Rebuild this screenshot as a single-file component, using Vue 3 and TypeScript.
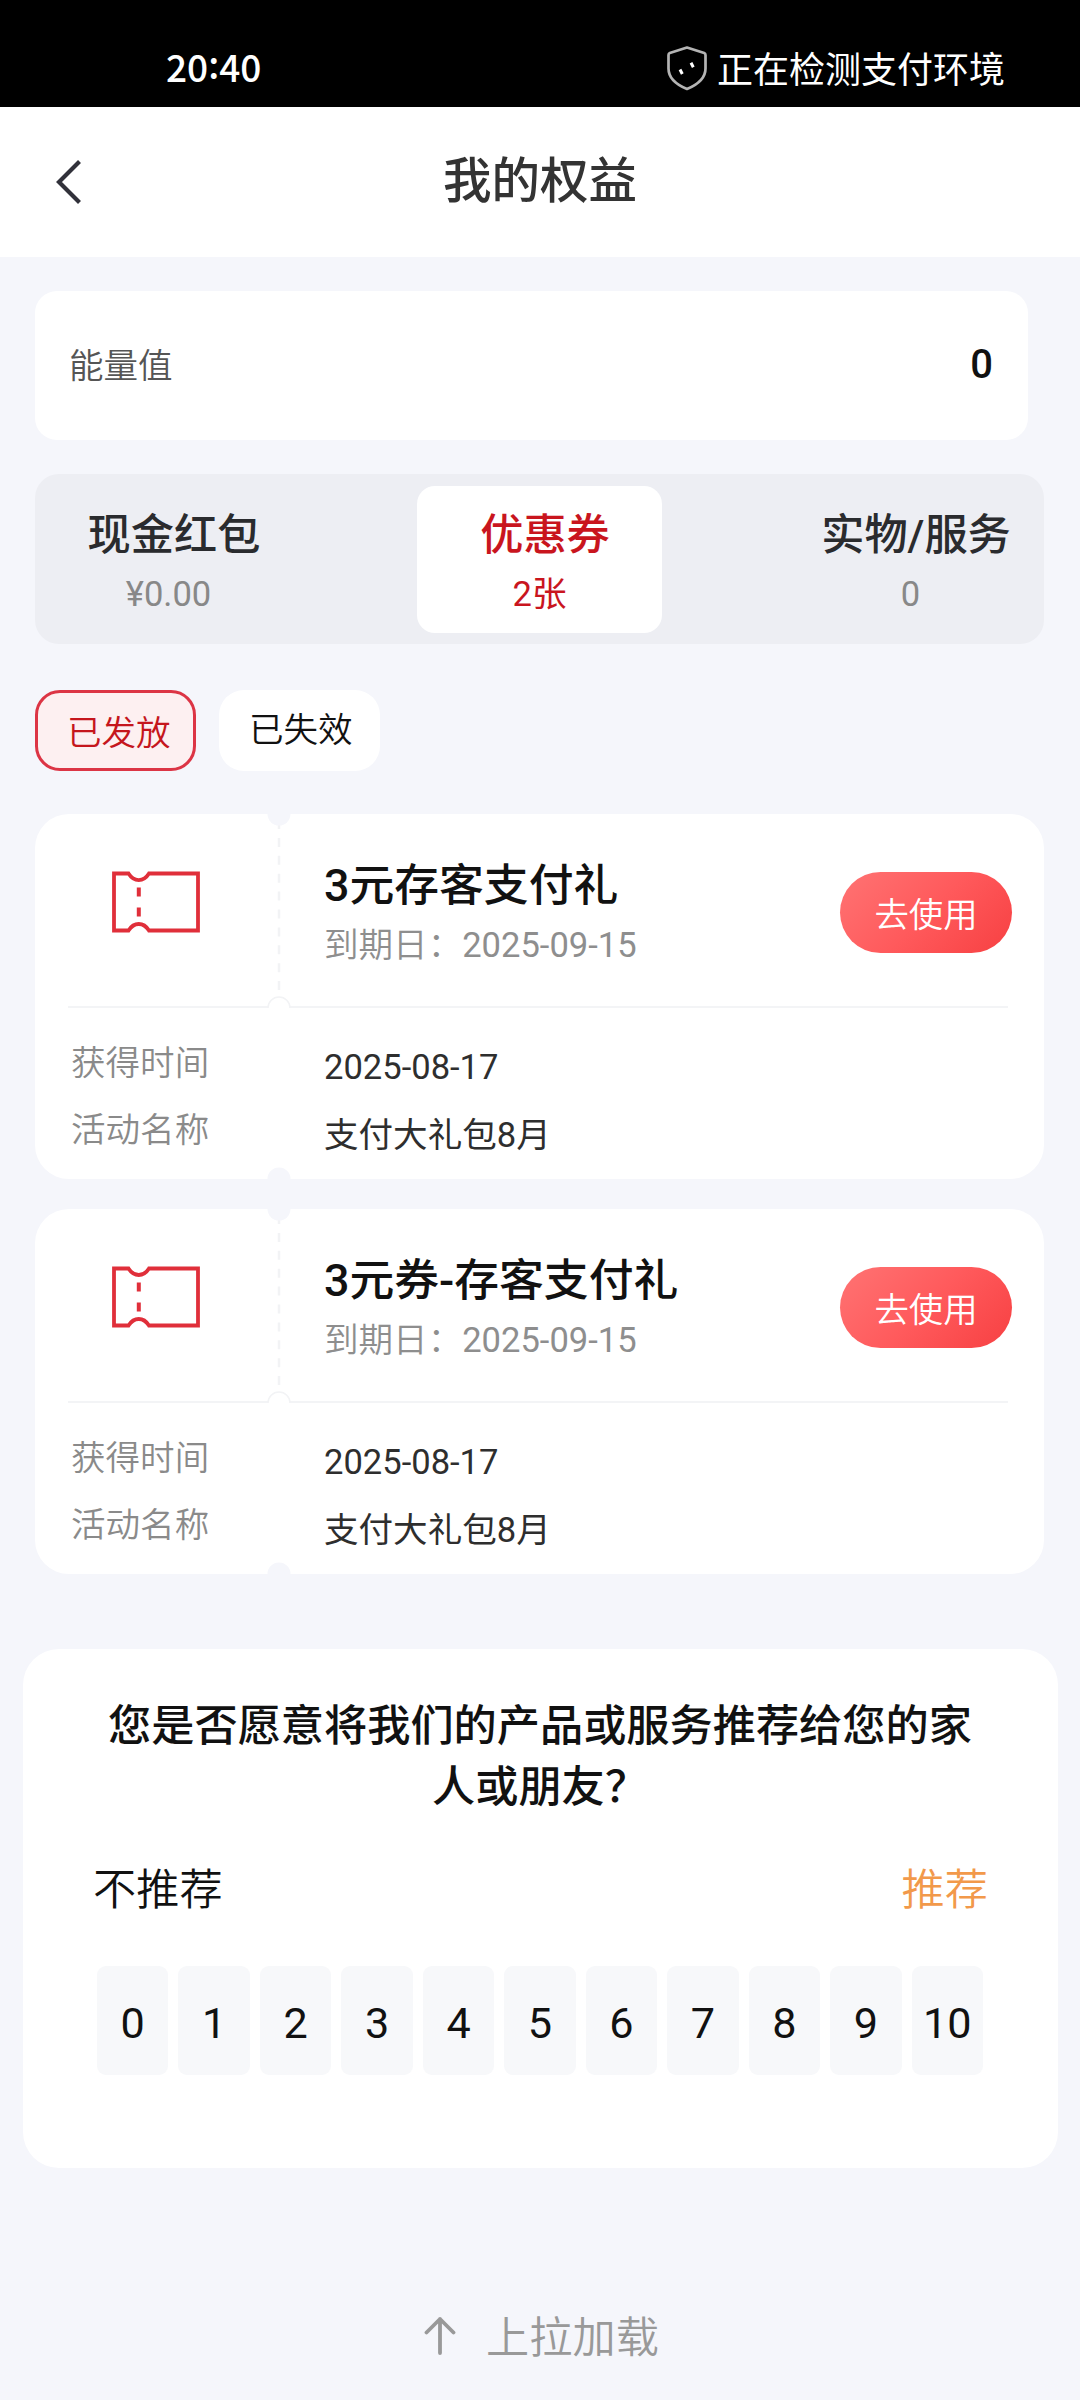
<script setup lang="ts">
import { ref } from 'vue'

interface Tab {
  label: string
  count: string
}

interface Coupon {
  title: string
  expires: string
  obtained: string
  activity: string
}

const tabs: Tab[] = [
  { label: '现金红包', count: '¥0.00' },
  { label: '优惠券', count: '2张' },
  { label: '实物/服务', count: '0' },
]
const activeTab = ref(1)

const filters: string[] = ['已发放', '已失效']
const activeFilter = ref(0)

const coupons: Coupon[] = [
  { title: '3元存客支付礼', expires: '2025-09-15', obtained: '2025-08-17', activity: '支付大礼包8月' },
  { title: '3元券-存客支付礼', expires: '2025-09-15', obtained: '2025-08-17', activity: '支付大礼包8月' },
]

const scores: number[] = Array.from({ length: 11 }, (_, i) => i)
</script>

<template>
  <div class="page">
    <div class="status">
      <span class="time">20<i class="colon">:</i>40</span>
      <div class="secure">
        <svg class="shield" width="42" height="46" viewBox="0 0 42 46" fill="none">
          <path d="M21 2.5 38.2 8q1.3.5 1.3 2v13.500C39.500 33 32 39.500 21 44 10 39.500 2.500 33 2.500 23.500V10q0-1.500 1.300-2Z" stroke="#b4b4b4" stroke-width="2.700" stroke-linejoin="round" />
          <path d="m14 24.500 2.300 4.500M25 17.800l2.300 4.500" stroke="#fff" stroke-width="3" />
        </svg>
        <span>正在检测支付环境</span>
      </div>
    </div>

    <header class="nav">
      <svg class="back" width="30" height="48" viewBox="0 0 30 48" fill="none">
        <path d="M25.500 3.500 5 24l20.500 20.500" stroke="#31313a" stroke-width="4.200" />
      </svg>
      <h1>我的权益</h1>
    </header>

    <main>
      <section class="energy">
        <span class="energy-label">能量值</span>
        <span class="energy-value">0</span>
      </section>

      <nav class="tabs">
        <button
          v-for="(tab, i) in tabs"
          :key="tab.label"
          class="tab"
          :class="{ active: i === activeTab }"
          @click="activeTab = i"
        >
          <span class="tab-label">{{ tab.label }}</span>
          <span class="tab-count">{{ tab.count }}</span>
        </button>
      </nav>

      <div class="filters">
        <button
          v-for="(name, i) in filters"
          :key="name"
          class="chip"
          :class="{ active: i === activeFilter }"
          @click="activeFilter = i"
        >{{ name }}</button>
      </div>

      <article v-for="coupon in coupons" :key="coupon.title" class="coupon">
        <svg class="perforation" width="24" height="365" viewBox="0 0 24 365" fill="none">
          <path d="M12 11V182" stroke="#f2f3f5" stroke-width="2.500" stroke-dasharray="9 8.900" stroke-dashoffset="5" />
          <circle cx="12" cy="0" r="11.500" fill="#f5f6fb" />
          <path d="M1 195V193a11 11 0 0 1 22 0V195Z" fill="#fff" />
          <path d="M1 194a11 11 0 0 1 22 0" stroke="#f2f3f5" stroke-width="1.500" />
          <circle cx="12" cy="365" r="11.500" fill="#f5f6fb" />
        </svg>
        <div class="coupon-head">
          <div class="coupon-icon">
            <svg width="88" height="62" viewBox="0 0 88 62" fill="none" stroke="#e02f3a">
              <path d="M2 2.500H16.500C22 11.200 31.500 11.200 37 2.500H86V59.500H37C31.500 50.800 22 50.800 16.500 59.500H2Z" stroke-width="3.800" />
              <path d="M26.800 16.500v9M26.800 36.500v9" stroke-width="4" />
            </svg>
          </div>
          <div class="coupon-info">
            <h2>{{ coupon.title }}</h2>
            <p><span class="thin">到期日：</span>{{ coupon.expires }}</p>
          </div>
          <button class="use">去使用</button>
        </div>
        <div class="coupon-body">
          <dl class="labels">
            <dt>获得时间</dt>
            <dt>活动名称</dt>
          </dl>
          <dl class="values">
            <dd>{{ coupon.obtained }}</dd>
            <dd>{{ coupon.activity }}</dd>
          </dl>
        </div>
      </article>
    </main>

    <section class="survey">
      <h3>您是否愿意将我们的产品或服务推荐给您的家人或朋友？</h3>
      <div class="ends">
        <span>不推荐</span>
        <span class="yes">推荐</span>
      </div>
      <div class="scores">
        <button v-for="n in scores" :key="n" class="score">{{ n }}</button>
      </div>
    </section>

    <footer class="more">
      <svg width="32" height="40" viewBox="0 0 32 40" fill="none" stroke="#999" stroke-width="3.800" stroke-linecap="round">
        <path d="M16 3v34M2.500 16.500 16 3l13.500 13.500" stroke-linejoin="round" />
      </svg>
      <span>上拉加载</span>
    </footer>
  </div>
</template>

<style>
body {
  background: #f5f6fb;
}
</style>

<style scoped>
.page {
  width: 1080px;
  height: 2400px;
  overflow: hidden;
  background: #f5f6fb;
  color: #111;
  font-family: Roboto, 'Noto Sans CJK SC', sans-serif;
  font-size: 34.56px;
}
.page * {
  box-sizing: border-box;
}
h1,
h2,
h3,
p,
dl,
dd {
  margin: 0;
  font-weight: 400;
}
button {
  border: 0;
  padding: 0;
  background: none;
  color: inherit;
  font: inherit;
}
svg {
  display: block;
  flex: none;
}
.energy-label,
.thin,
.chip,
.labels dt,
.use,
.ends,
.more {
  font-weight: 350;
}

.status {
  display: flex;
  justify-content: space-between;
  height: 107px;
  padding: 43px 75px 0 166px;
  background: #000;
  color: #fff;
  line-height: 52px;
}
.time {
  font-family: 'Noto Sans CJK SC', sans-serif;
  font-size: 37px;
  font-weight: 500;
  line-height: 47px;
}
.colon {
  position: relative;
  top: -3px;
  font-style: normal;
}
.secure {
  display: flex;
  gap: 9px;
  font-size: 36px;
  line-height: 56px;
}
.shield {
  margin-top: 2px;
}

.nav {
  display: flex;
  align-items: center;
  height: 150px;
  padding: 0 54px;
  background: #fff;
}
.nav h1 {
  flex: 1;
  margin-right: 30px;
  text-align: center;
  color: #333;
  font-size: 48.500px;
  font-weight: 500;
  line-height: 70px;
}

main {
  padding: 34px 36px 0 35px;
}
.energy {
  display: flex;
  align-items: center;
  justify-content: space-between;
  height: 149px;
  margin-right: 16px;
  padding: 0 35px 0 34px;
  border-radius: 22px;
  background: #fff;
}
.energy-label {
  color: #555;
  line-height: 50px;
}
.energy-value {
  font-size: 40px;
  font-weight: 500;
  line-height: 60px;
  margin-bottom: 2px;
}

.tabs {
  display: flex;
  justify-content: space-between;
  height: 170px;
  margin-top: 34px;
  padding: 12px 11px 11px;
  border-radius: 24px;
  background: #edeef3;
}
.tab {
  display: flex;
  flex-direction: column;
  align-items: center;
  width: 245px;
  padding-top: 20px;
  border-radius: 18px;
  color: #2a2b2e;
}
.tab-label {
  margin-left: 11px;
  font-size: 43.200px;
  font-weight: 500;
  line-height: 60px;
}
.tab-count {
  margin-top: 3px;
  color: #888;
  line-height: 50px;
}
.tab.active {
  background: #fff;
}
.tab.active,
.tab.active .tab-count {
  color: #c9151e;
}

.filters {
  display: flex;
  gap: 23px;
  margin-top: 46px;
}
.chip {
  display: flex;
  align-items: flex-start;
  width: 161px;
  height: 81px;
  padding: 15px 0 0 30px;
  border-radius: 25px;
  background: #fff;
  line-height: 50px;
}
.chip.active {
  padding-left: 29px;
  border: 3px solid #dc3545;
  background: #fdf0f1;
  color: #c5161d;
}

.coupon {
  position: relative;
  height: 365px;
  margin-top: 30px;
  border-radius: 34px;
  background: #fff;
}
.filters + .coupon {
  margin-top: 43px;
}
.perforation {
  position: absolute;
  left: 232px;
  top: 0;
}
.coupon-head {
  display: flex;
  height: 194px;
  margin: 0 36px 0 33px;
  border-bottom: 2px solid #f3f4f6;
}
.coupon-icon {
  width: 256px;
  padding: 57px 0 0 44px;
}
.coupon-info {
  flex: 1;
  padding-top: 41px;
  white-space: nowrap;
}
.coupon-info h2 {
  color: #111;
  font-size: 44.800px;
  font-weight: 500;
  line-height: 62px;
}
.coupon-info p {
  color: #8e8e8e;
  line-height: 57px;
}
.use {
  flex: none;
  width: 172px;
  height: 81px;
  margin: 58px -4px 0 0;
  border-radius: 41px;
  background: linear-gradient(135deg, #ff7373 0%, #ff5a5c 50%, #f74042 100%);
  color: #fff;
  font-size: 34.400px;
  line-height: 86px;
}
.coupon-body {
  display: flex;
  padding: 22px 0 0 36px;
}
.labels {
  width: 253px;
  color: #8a8a8a;
  line-height: 66.500px;
}
.values {
  padding-top: 4px;
  color: #2e2e2e;
  line-height: 67.500px;
}

.survey {
  height: 519px;
  margin: 75px 22px 0 23px;
  padding: 47px 75px 0 74px;
  border-radius: 36px;
  background: #fff;
}
.survey h3 {
  margin: 0 9px;
  font-size: 43.200px;
  font-weight: 500;
  line-height: 61px;
  text-align: center;
}
.ends {
  display: flex;
  justify-content: space-between;
  margin: 43px -5px 0 -4px;
  font-size: 43.200px;
  line-height: 60px;
}
.yes {
  color: #f2994a;
}
.scores {
  display: flex;
  gap: 10px;
  margin-top: 45px;
}
.score {
  flex: 1 1 0;
  height: 109px;
  border-radius: 9px;
  background: #f7f8fa;
  font-size: 43.200px;
  line-height: 115px;
}

.more {
  display: flex;
  justify-content: center;
  gap: 30px;
  margin: 141px 0 0 3px;
  color: #999;
  font-size: 43.200px;
  line-height: 60px;
}
.more svg {
  margin-top: 7px;
}
</style>
